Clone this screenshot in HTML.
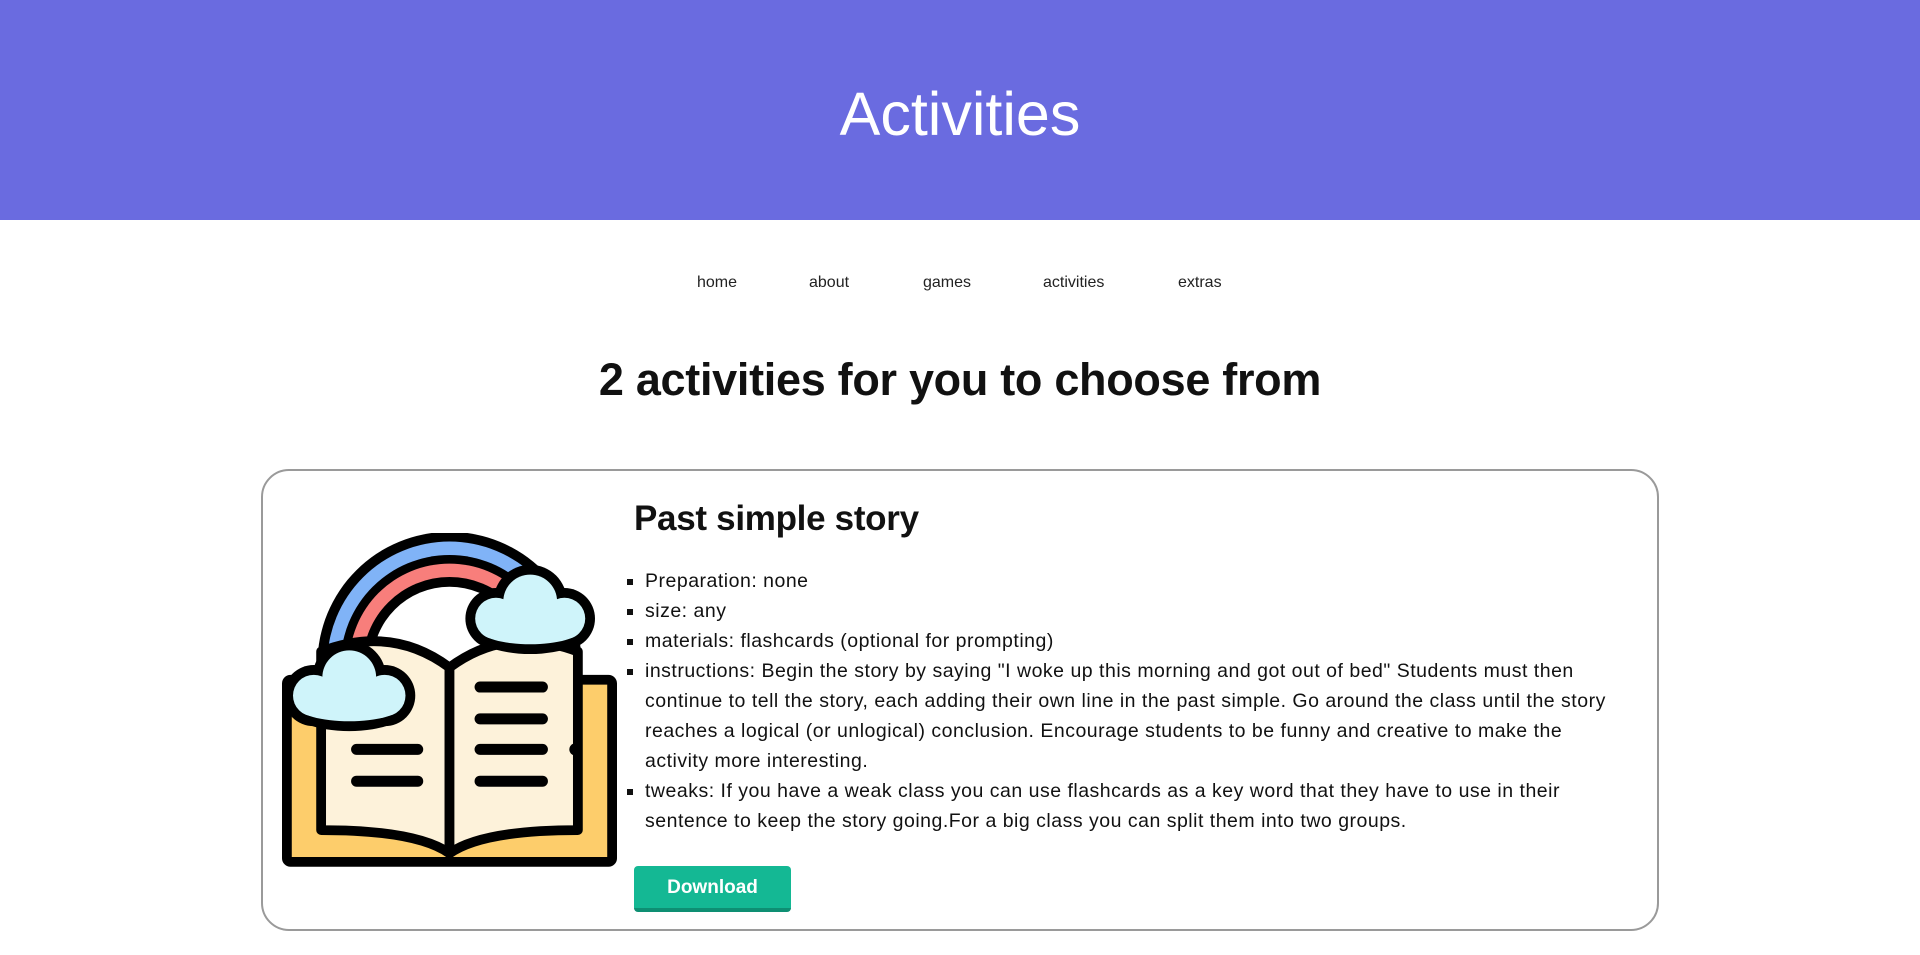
<!DOCTYPE html>
<html><head><meta charset="utf-8"><style>
*{margin:0;padding:0;box-sizing:border-box}
body{width:1920px;height:955px;overflow:hidden;background:#fff;font-family:"Liberation Sans",sans-serif;color:#111}
.hd{height:220px;background:#6a6be0;display:flex;align-items:center;justify-content:center}
.hd h1{color:#fff;font-weight:400;font-size:61px;margin-top:8px}
.nav{position:absolute;top:274px;left:0;width:1920px;font-size:16px;color:#222}
.nav span{position:absolute}
h2{position:absolute;top:354px;width:1920px;text-align:center;font-size:45px;font-weight:700;letter-spacing:-0.3px}
.card{position:absolute;left:261px;top:469px;width:1398px;height:462px;border:2px solid #9a9a9a;border-radius:28px}
.card svg{position:absolute;left:19px;top:62px}
.t{position:absolute;left:371px;top:28px;font-size:35px;font-weight:700;letter-spacing:-0.3px}
ul{position:absolute;left:382px;top:95px;width:1050px;font-size:19.5px;line-height:30px;list-style:square;color:#111;white-space:nowrap;letter-spacing:0.5px}
.btn{position:absolute;left:371px;top:395px;width:157px;height:46px;background:#14b894;border-bottom:4px solid #0e8f73;border-radius:4px;color:#fff;font-weight:700;font-size:19px;text-align:center;line-height:44px}
</style></head><body>
<div class="hd"><h1>Activities</h1></div>
<div class="nav"><span style="left:697px">home</span><span style="left:809px">about</span><span style="left:923px">games</span><span style="left:1043px">activities</span><span style="left:1178px">extras</span></div>
<h2>2 activities for you to choose from</h2>
<div class="card">
<svg width="335" height="335" viewBox="0 0 274 274">
<defs><clipPath id="c"><rect x="0" y="0" width="274" height="130"/></clipPath></defs>
<g clip-path="url(#c)">
<circle cx="137" cy="107" r="108" fill="#000"/>
<circle cx="137" cy="107" r="100" fill="#80b3f7"/>
<circle cx="137" cy="107" r="89" fill="#000"/>
<circle cx="137" cy="107" r="82" fill="#f87e7b"/>
<circle cx="137" cy="107" r="71" fill="#000"/>
<circle cx="137" cy="107" r="63" fill="#fff"/>
</g>
<rect x="4" y="120" width="266" height="149" rx="3" fill="#fdcd6b" stroke="#000" stroke-width="8"/>
<path d="M32,97 Q90,75 137,110 L137,262 Q110,243 32,243 Z" fill="#fdf2da" stroke="#000" stroke-width="8" stroke-linejoin="round"/>
<path d="M137,110 Q184,75 242,97 L242,243 Q164,243 137,262 Z" fill="#fdf2da" stroke="#000" stroke-width="8" stroke-linejoin="round"/>
<g stroke="#000" stroke-width="9" stroke-linecap="round">
<line x1="162" y1="126" x2="213" y2="126"/><line x1="162" y1="152" x2="213" y2="152"/><line x1="162" y1="177" x2="213" y2="177"/><line x1="162" y1="203" x2="213" y2="203"/>
<line x1="61" y1="177" x2="111" y2="177"/><line x1="61" y1="203" x2="111" y2="203"/>
</g>
<circle cx="240" cy="177" r="5" fill="#000"/>
<g fill="#000">
<circle cx="55" cy="118" r="30"/><circle cx="26" cy="133" r="25"/><circle cx="84" cy="133" r="25"/><ellipse cx="55" cy="142" rx="50" ry="20"/>
<circle cx="203" cy="56" r="30"/><circle cx="175" cy="70" r="25"/><circle cx="231" cy="70" r="25"/><ellipse cx="203" cy="79" rx="49" ry="20"/>
</g>
<g fill="#cff4fa">
<circle cx="55" cy="118" r="22"/><circle cx="26" cy="133" r="17"/><circle cx="84" cy="133" r="17"/><ellipse cx="55" cy="142" rx="42" ry="12"/>
<circle cx="203" cy="56" r="22"/><circle cx="175" cy="70" r="17"/><circle cx="231" cy="70" r="17"/><ellipse cx="203" cy="79" rx="41" ry="12"/>
</g>
</svg>
<div class="t">Past simple story</div>
<ul>
<li>Preparation: none</li>
<li>size: any</li>
<li>materials: flashcards (optional for prompting)</li>
<li>instructions: Begin the story by saying "I woke up this morning and got out of bed" Students must then<br>continue to tell the story, each adding their own line in the past simple. Go around the class until the story<br>reaches a logical (or unlogical) conclusion. Encourage students to be funny and creative to make the<br>activity more interesting.</li>
<li>tweaks: If you have a weak class you can use flashcards as a key word that they have to use in their<br>sentence to keep the story going.For a big class you can split them into two groups.</li>
</ul>
<div class="btn">Download</div>
</div>
</body></html>
